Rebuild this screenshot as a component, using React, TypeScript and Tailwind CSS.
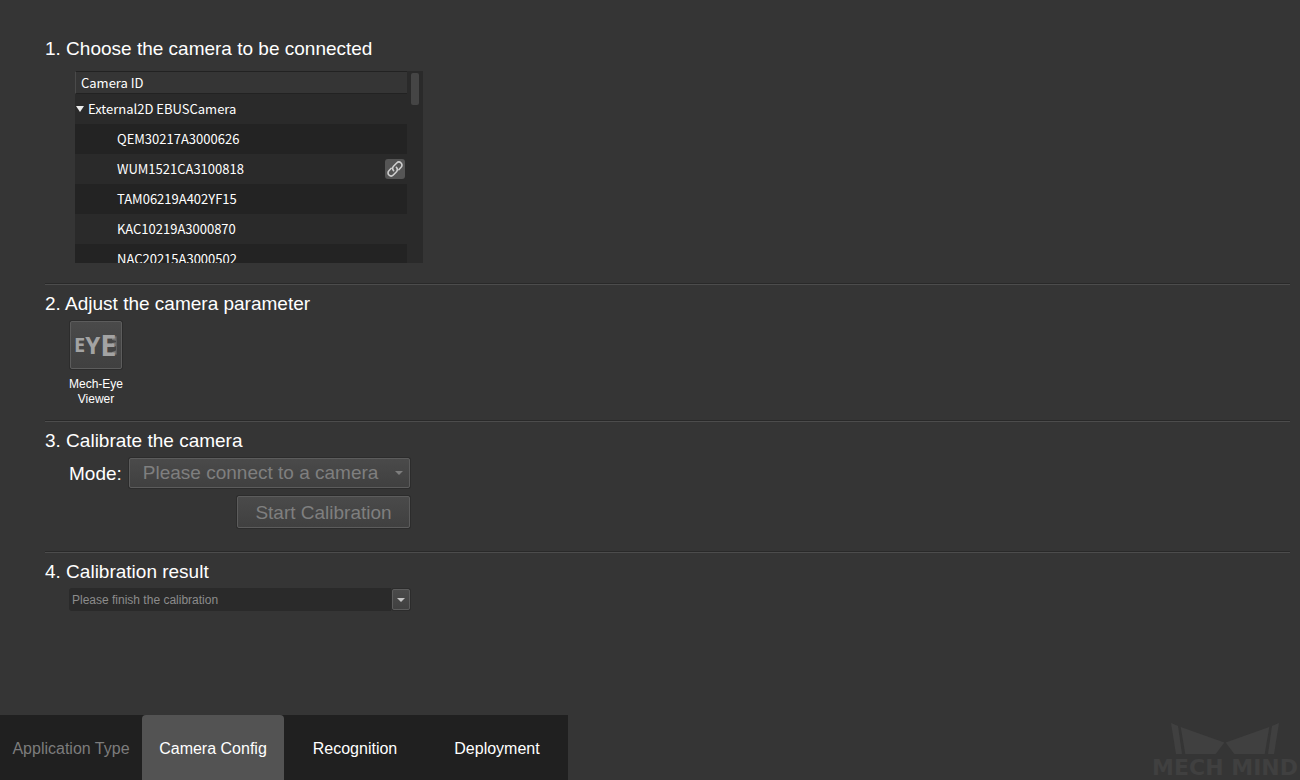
import React from "react";

const cameras = [
  { id: "QEM30217A3000626", linked: false },
  { id: "WUM1521CA3100818", linked: true },
  { id: "TAM06219A402YF15", linked: false },
  { id: "KAC10219A3000870", linked: false },
  { id: "NAC20215A3000502", linked: false },
];

const tabs = [
  { label: "Application Type", tone: "text-[#7c7c7c]" },
  { label: "Camera Config", tone: "rounded-t bg-[#535353] text-white", current: true },
  { label: "Recognition", tone: "text-white" },
  { label: "Deployment", tone: "text-white" },
];

const raised =
  "rounded-xs border border-[#5c5c5c] bg-linear-to-b from-[#4a4a4a] to-[#404040] shadow-[0_0_0_1px_#2c2c2c]";

function Section({ title, className, children }: { title: string; className: string; children: React.ReactNode }) {
  return (
    <section className={className}>
      <h2 className="text-[19px] leading-6 text-white">{title}</h2>
      {children}
    </section>
  );
}

function Divider() {
  return <hr className="h-0.5 border-t border-b border-t-[#292929] border-b-[#4c4c4c]" />;
}

function LinkIcon() {
  return (
    <svg viewBox="0 0 20 20" className="size-5" fill="none" stroke="#cfcfcf" strokeWidth="1.6" strokeLinecap="round" aria-hidden="true">
      <path d="M8.6 11.6a3 3 0 0 1-.1-4.3l3.2-3.3a3.05 3.05 0 0 1 4.4 4.3l-2.3 2.4" />
      <path d="M11.4 8.4a3 3 0 0 1 .1 4.3l-3.2 3.3a3.05 3.05 0 0 1-4.4-4.3l2.3-2.4" />
    </svg>
  );
}

function EyeMark() {
  return (
    <svg viewBox="0 0 50 46" className="h-[46px] w-[50px] font-['Noto_Sans',sans-serif] font-bold" aria-hidden="true">
      <path d="M41 13l5 2v4l-5-1zM41 21l5-1v4l-5 1zM41 30l5-2v4l-5 2z" fill="#707070" />
      <path d="M45 14l1 1v17l-1 1z" fill="#606060" />
      <text x="3" y="30" fontSize="20" fill="#a3a3a3">
        E<tspan fontSize="24" dy="2">Y</tspan>
        <tspan fontSize="29" dy="2">E</tspan>
      </text>
    </svg>
  );
}

function Brand() {
  return (
    <div className="flex flex-col items-center gap-0.5 pr-0.5 text-[#404040]">
      <svg viewBox="0 0 108 31" className="h-[31px] w-[108px]" fill="currentColor" aria-hidden="true">
        <path d="M0 0l7 3 4 28H5zM9.7 4L53.3 19.5 44.7 31H14.3zM98.3 4L54.7 19.5 63.3 31h30.4zM108 0l-7 3-4 28h6z" />
      </svg>
      <span className="font-['DejaVu_Sans',sans-serif] text-[22px] leading-6 font-bold whitespace-nowrap">MECH MIND</span>
    </div>
  );
}

export default function App() {
  return (
    <div className="flex min-h-screen flex-col bg-[#353535] font-['Liberation_Sans',Arial,sans-serif] text-white">
      <main className="flex-1 pt-[37px] pr-2.5 pl-[45px]">
        <Section title="1. Choose the camera to be connected" className="pb-5">
          <div className="mt-2.5 ml-[30px] flex h-48 max-w-[348px] overflow-hidden bg-[#2a2a2a] font-['Noto_Sans_CJK_SC',sans-serif] text-[13px] leading-4">
            <table className="h-max flex-1 border-separate border-spacing-0 text-left">
              <thead>
                <tr className="h-[23px] bg-[#353535]">
                  <th colSpan={2} className="border-y border-l border-y-[#222222] border-l-[#4a4a4a] px-[5px] font-normal">
                    Camera ID
                  </th>
                </tr>
              </thead>
              <tbody>
                <tr className="h-[30px]">
                  <td colSpan={2}>
                    <button type="button" className="flex items-center gap-1 pl-px">
                      <svg viewBox="0 0 8 6" className="h-1.5 w-2" fill="#ececec" aria-hidden="true">
                        <path d="M0 0h8L4 6z" />
                      </svg>
                      External2D EBUSCamera
                    </button>
                  </td>
                </tr>
                {cameras.map((camera) => (
                  <tr key={camera.id} className="h-[30px] odd:bg-[#2a2a2a] even:bg-[#232323]">
                    <td className="pl-[42px]">{camera.id}</td>
                    <td className="w-[22px] pr-0.5">
                      {camera.linked && (
                        <button type="button" aria-label="Disconnect camera" className="block size-5 rounded-[3px] bg-[#555555]">
                          <LinkIcon />
                        </button>
                      )}
                    </td>
                  </tr>
                ))}
              </tbody>
            </table>
            <div className="w-4 px-1 pt-0.5">
              <div className="h-8 rounded-xs bg-[#454545]" />
            </div>
          </div>
        </Section>

        <Divider />

        <Section title="2. Adjust the camera parameter" className="pt-[7px] pb-[13px]">
          <button type="button" className="mt-[5px] ml-6 flex flex-col items-center gap-2 text-[12px] leading-[15px]">
            <span className={`flex ${raised}`}>
              <EyeMark />
            </span>
            <span>
              Mech-Eye
              <br />
              Viewer
            </span>
          </button>
        </Section>

        <Divider />

        <Section title="3. Calibrate the camera" className="pt-[7px] pb-[23px]">
          <div className="mt-[5px] ml-6 flex max-w-[341px] flex-col items-end gap-2 text-[19px] leading-7">
            <div className="flex w-full items-center gap-[7px]">
              <label htmlFor="mode" className="pt-0.5">Mode:</label>
              <div className="relative flex-1">
                <select
                  id="mode"
                  disabled
                  className={`block h-[30px] w-full appearance-none pl-[13px] leading-7 text-[#7f7f7f] opacity-100 ${raised}`}
                >
                  <option>Please connect to a camera</option>
                </select>
                <svg viewBox="0 0 8 4" className="pointer-events-none absolute top-[13px] right-[7px] h-1 w-2" fill="#7d7d7d" aria-hidden="true">
                  <path d="M0 0h8L4 4z" />
                </svg>
              </div>
            </div>
            <button type="button" disabled className={`h-8 w-[173px] pt-0.5 text-[#7f7f7f] ${raised}`}>
              Start Calibration
            </button>
          </div>
        </Section>

        <Divider />

        <Section title="4. Calibration result" className="pt-[7px] pb-6">
          <div className="relative mt-1 ml-6 max-w-[341px]">
            <select
              aria-label="Calibration result"
              className="block h-[23px] w-full appearance-none rounded-[3px] bg-[#2a2a2a] pl-[3px] text-[12px] text-[#8c8c8c]"
            >
              <option>Please finish the calibration</option>
            </select>
            <span className="pointer-events-none absolute inset-y-0 right-0 flex w-[19px] bg-[#353535] py-px pl-px">
              <span className={`flex flex-1 items-center justify-center ${raised}`}>
                <svg viewBox="0 0 8 4" className="h-1 w-2" fill="#c4c4c4" aria-hidden="true">
                  <path d="M0 0h8L4 4z" />
                </svg>
              </span>
            </span>
          </div>
        </Section>
      </main>

      <footer className="flex items-end justify-between">
        <nav className="flex bg-[#202020]">
          {tabs.map((tab) => (
            <button
              key={tab.label}
              type="button"
              aria-current={tab.current ? "page" : undefined}
              className={`h-[65px] w-[142px] pt-0.5 text-[16px] ${tab.tone}`}
            >
              {tab.label}
            </button>
          ))}
        </nav>
        <Brand />
      </footer>
    </div>
  );
}
